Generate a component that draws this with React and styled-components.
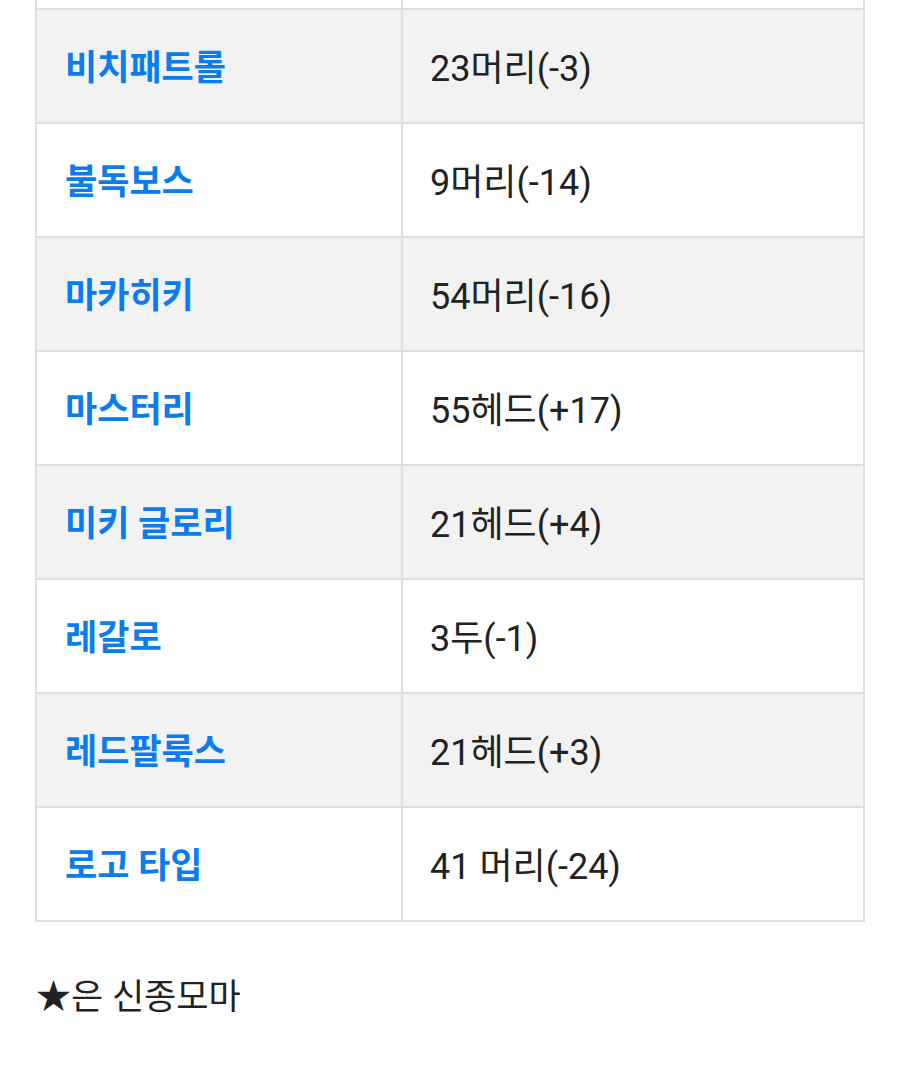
import styled, { createGlobalStyle } from "styled-components";

const GlobalStyle = createGlobalStyle`
  html, body {
    margin: 0;
    padding: 0;
    background: #fff;
  }
  body {
    font-family: Roboto, "Noto Sans CJK KR", sans-serif;
    color: #222;
  }
`;

const Page = styled.div`
  padding: 0 35px 0 35px;
  overflow: hidden;
`;

const Table = styled.table`
  width: 830px;
  border-collapse: collapse;
  margin-top: -106px;
  table-layout: fixed;
`;

const Row = styled.tr`
  height: 114px;
  background: ${(p) => (p.$shaded ? "#f2f2f2" : "#fff")};
`;

const NameCell = styled.td`
  width: 366px;
  box-sizing: border-box;
  border: 2px solid #dedede;
  padding: 0 0 3px 28px;
  font-size: 35px;
  font-weight: 700;
  color: #0a7cf0;
  vertical-align: middle;
`;

const CountCell = styled.td`
  border: 2px solid #dedede;
  padding: 0 0 3px 27px;
  font-size: 36px;
  color: #222;
  vertical-align: middle;
`;

const Note = styled.p`
  margin: 46px 0 0 1px;
  font-size: 35px;
  color: #222;
`;

const rows = [
  ["", ""],
  ["비치패트롤", "23머리(-3)"],
  ["불독보스", "9머리(-14)"],
  ["마카히키", "54머리(-16)"],
  ["마스터리", "55헤드(+17)"],
  ["미키 글로리", "21헤드(+4)"],
  ["레갈로", "3두(-1)"],
  ["레드팔룩스", "21헤드(+3)"],
  ["로고 타입", "41 머리(-24)"],
];

export default function App() {
  return (
    <>
      <GlobalStyle />
      <Page>
        <Table>
          <tbody>
            {rows.map(([name, count], i) => (
              <Row key={i} $shaded={i % 2 === 1}>
                <NameCell>{name}</NameCell>
                <CountCell>{count}</CountCell>
              </Row>
            ))}
          </tbody>
        </Table>
        <Note>★은 신종모마</Note>
      </Page>
    </>
  );
}
